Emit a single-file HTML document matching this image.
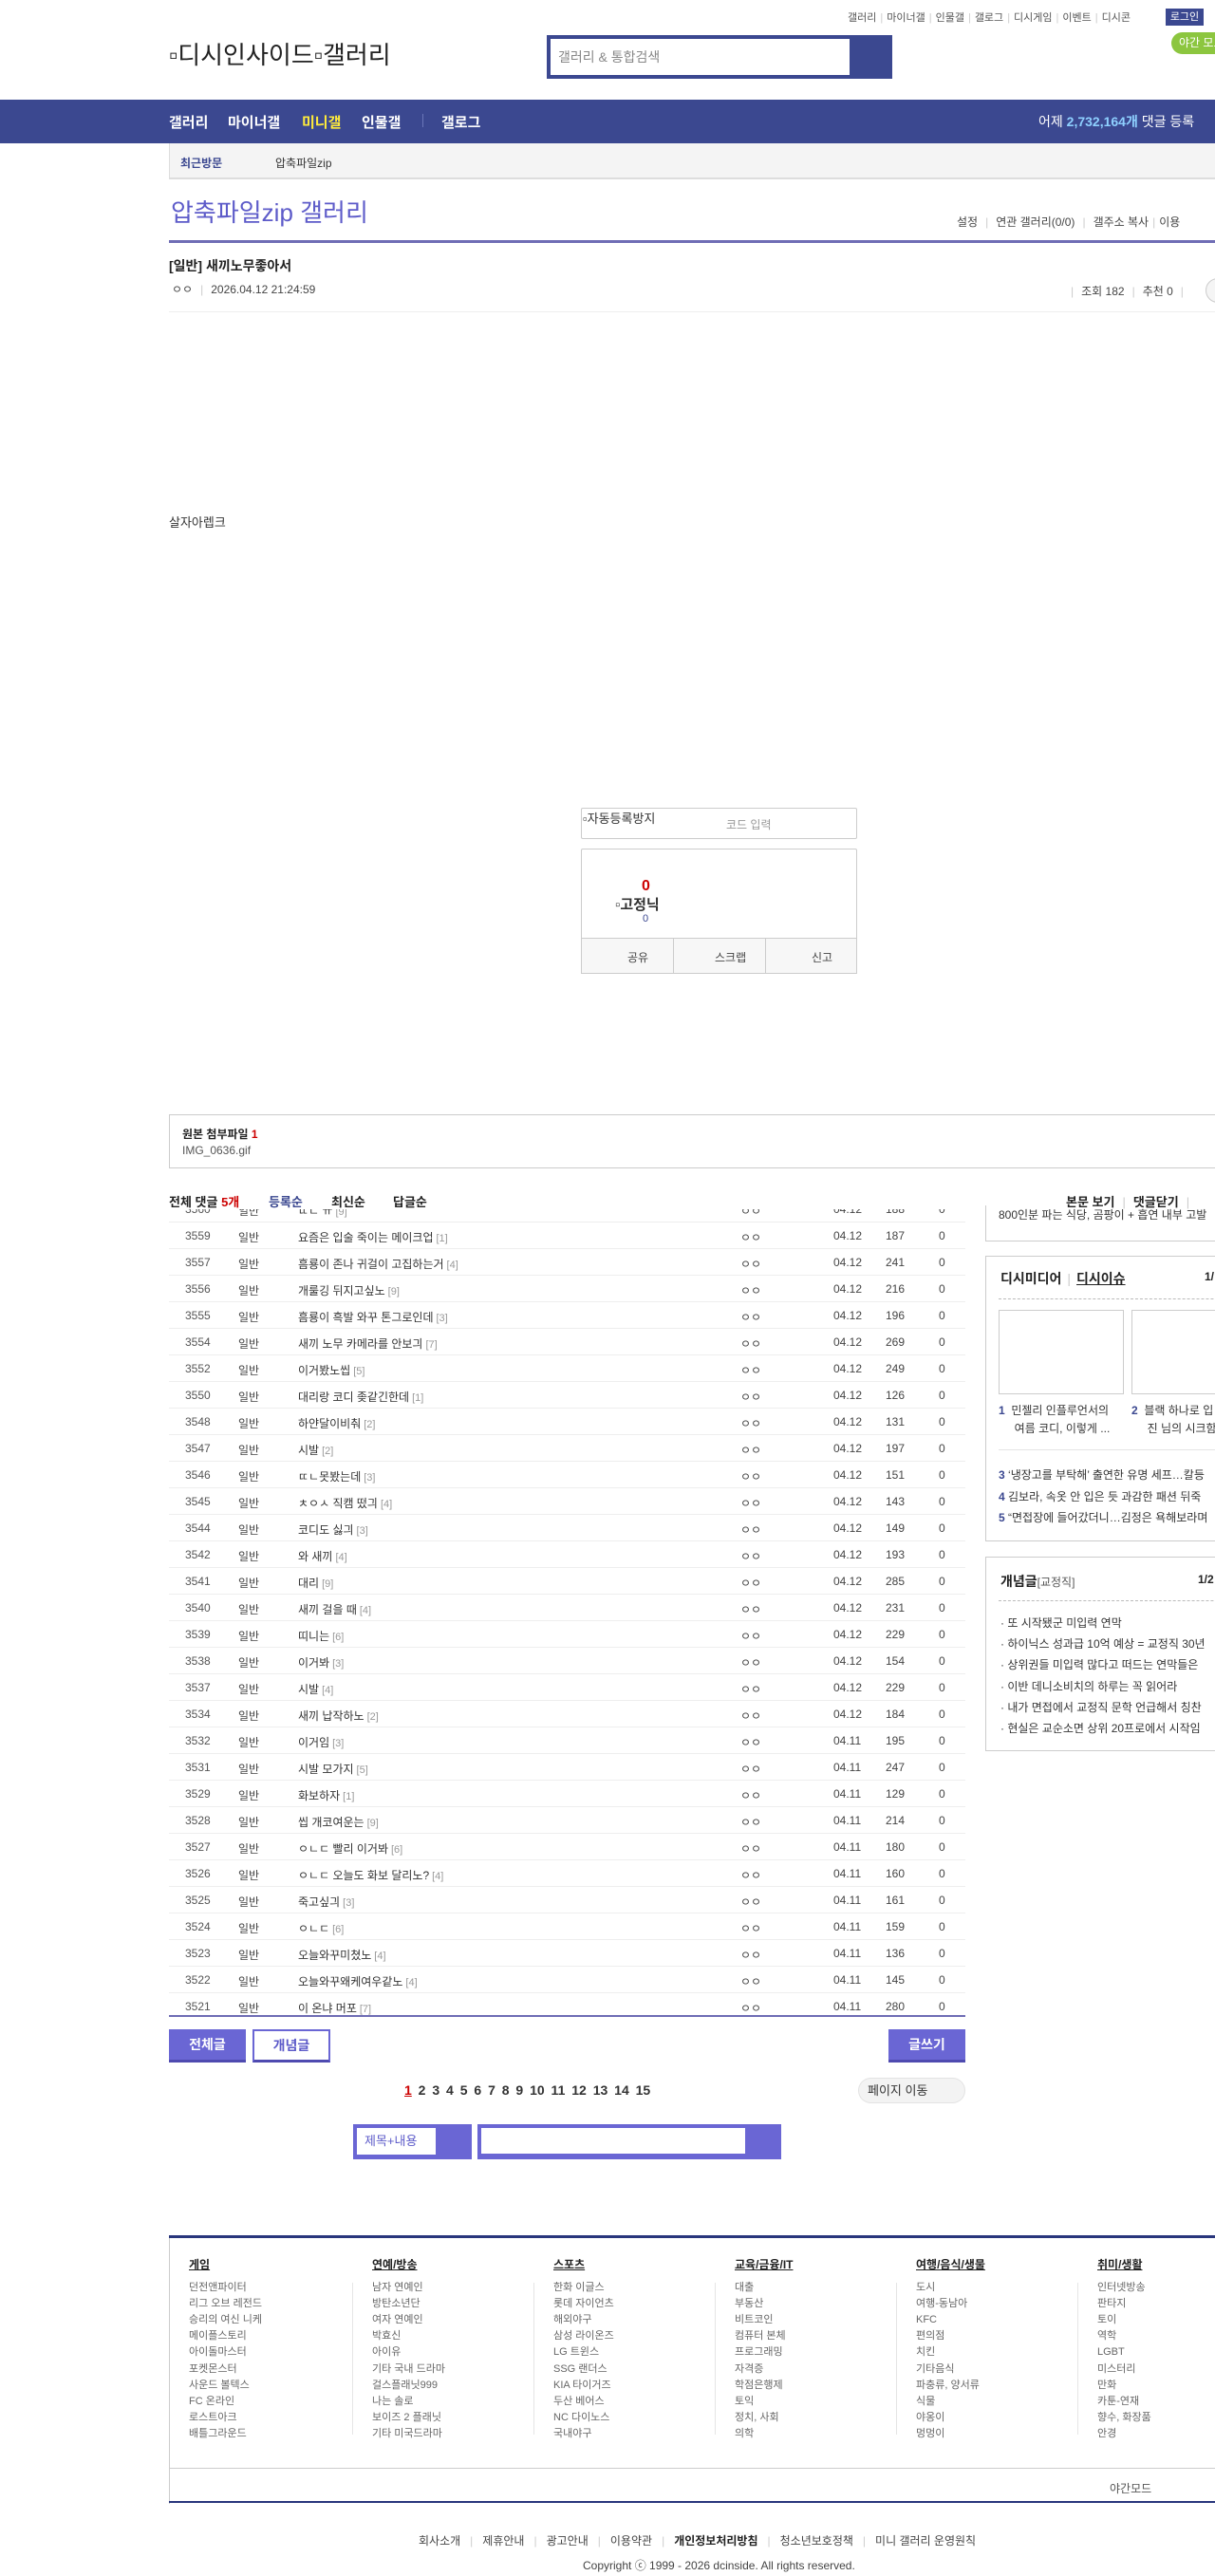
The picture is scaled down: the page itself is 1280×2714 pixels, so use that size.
<!DOCTYPE html>
<html><head><meta charset="utf-8">
<style>
*{margin:0;padding:0;box-sizing:border-box}
html,body{width:1280px;height:2714px;overflow:hidden;background:#fff}
body{font-family:"Liberation Sans","Noto Sans CJK KR",sans-serif;color:#333;font-size:12px;position:relative}
.a{position:absolute;white-space:nowrap}
.sep{color:#ccc;margin:0 4px}
.row{position:absolute;left:178px;width:839px;height:28px;border-bottom:1px solid #eee;font-size:12px;color:#444}
.row span{position:absolute;top:7px;white-space:nowrap}
.row .n{left:17px;color:#555}.row .k{left:73px}.row .t{left:136px;color:#333}.row .t i{font-style:normal;color:#999;font-size:11px;margin-left:3px}
.row .w{left:602px}.row .d{left:700px}.row .v{left:755px}.row .r{left:811px}
.fh{font-weight:bold;text-decoration:underline;font-size:12px;color:#222}
.fc{position:absolute;top:2378px;font-size:11px;color:#666;line-height:17.1px}
.fc b{display:block;font-size:12px;color:#222;text-decoration:underline;margin-bottom:7px}
.fsep{position:absolute;top:2405px;width:1px;height:160px;background:#e5e5e5}
</style></head><body>

<!-- top links -->
<div class="a" style="left:893px;top:10px;font-size:11px;color:#555">갤러리<span class="sep">|</span>마이너갤<span class="sep">|</span>인물갤<span class="sep">|</span>갤로그<span class="sep">|</span>디시게임<span class="sep">|</span>이벤트<span class="sep">|</span>디시콘</div>
<div class="a" style="left:1228px;top:9px;width:40px;height:18px;background:#3b4890;color:#fff;font-size:11px;text-align:center;line-height:18px">로그인</div>
<div class="a" style="left:1234px;top:34px;width:60px;height:23px;background:#8cc63f;border-radius:12px;color:#fff;font-size:12px;line-height:23px;padding-left:8px">야간 모드</div>

<!-- logo -->
<div class="a" style="left:178px;top:38px;font-size:26px;color:#222">▫디시인사이드▫갤러리</div>
<!-- search -->
<div class="a" style="left:576px;top:37px;width:364px;height:46px;background:#3b4890"></div>
<div class="a" style="left:580px;top:41px;width:315px;height:38px;background:#fff;font-size:14px;color:#888;line-height:38px;padding-left:8px">갤러리 &amp; 통합검색</div>

<!-- nav -->
<div class="a" style="left:0;top:105px;width:1280px;height:46px;background:#3b4890"></div>
<div class="a" style="left:178px;top:118px;font-size:15px;font-weight:bold;color:#fff">갤러리</div>
<div class="a" style="left:240px;top:118px;font-size:15px;font-weight:bold;color:#fff">마이너갤</div>
<div class="a" style="left:318px;top:118px;font-size:15px;font-weight:bold;color:#ffeb3b">미니갤</div>
<div class="a" style="left:381px;top:118px;font-size:15px;font-weight:bold;color:#fff">인물갤</div>
<div class="a" style="left:445px;top:120px;width:1px;height:14px;background:#6a76b8"></div>
<div class="a" style="left:465px;top:118px;font-size:15px;font-weight:bold;color:#fff">갤로그</div>
<div class="a" style="left:1094px;top:118px;font-size:14px;color:#fff">어제 <b style="color:#8ed0ff">2,732,164개</b> 댓글 등록</div>

<!-- sub bar -->
<div class="a" style="left:178px;top:151px;width:1160px;height:38px;background:#f4f4f4;border:1px solid #ddd;border-top:none;border-bottom:2px solid #ddd"></div>
<div class="a" style="left:190px;top:163px;font-size:12px;font-weight:bold;color:#3b4890">최근방문</div>
<div class="a" style="left:290px;top:163px;font-size:12px;color:#333">압축파일zip</div>

<!-- gallery title -->
<div class="a" style="left:180px;top:204px;font-size:26px;color:#5d5bc9">압축파일zip 갤러리</div>
<div class="a" style="left:1008px;top:225px;font-size:12px;color:#444">설정<span class="sep" style="margin:0 8px">|</span>연관 갤러리(0/0)<span class="sep" style="margin:0 8px">|</span>갤주소 복사<span class="sep">|</span>이용</div>
<div class="a" style="left:178px;top:253px;width:1160px;height:3px;background:#6f6db5"></div>

<!-- post head -->
<div class="a" style="left:178px;top:270px;font-size:14px;font-weight:bold;color:#222">[일반] 새끼노무좋아서</div>
<div class="a" style="left:181px;top:296px;font-size:12px;color:#444">ㅇㅇ<span class="sep" style="margin:0 8px">|</span>2026.04.12 21:24:59</div>
<div class="a" style="left:1128px;top:298px;font-size:12px;color:#444"><span class="sep" style="margin:0 8px 0 0">|</span>조회 182<span class="sep" style="margin:0 8px">|</span>추천 0<span class="sep" style="margin:0 8px">|</span></div>
<div class="a" style="left:1270px;top:293px;width:30px;height:26px;border:1px solid #ccc;border-radius:13px;background:#f5f5f5"></div>
<div class="a" style="left:178px;top:328px;width:1160px;height:1px;background:#eee"></div>

<div class="a" style="left:178px;top:540px;font-size:13px;color:#333">살자아렙크</div>

<!-- captcha -->
<div class="a" style="left:612px;top:851px;width:291px;height:33px;border:1px solid #ccc;border-radius:2px"></div>
<div class="a" style="left:614px;top:852px;font-size:13px;color:#333">▫자동등록방지</div>
<div class="a" style="left:765px;top:860px;font-size:12px;color:#999">코드 입력</div>
<!-- recommend -->
<div class="a" style="left:612px;top:894px;width:291px;height:132px;border:1px solid #ccc;border-radius:2px"></div>
<div class="a" style="left:612px;top:988px;width:291px;height:38px;border:1px solid #ccc;background:#f7f7f7"></div>
<div class="a" style="left:709px;top:988px;width:1px;height:38px;background:#ccc"></div>
<div class="a" style="left:806px;top:988px;width:1px;height:38px;background:#ccc"></div>
<div class="a" style="left:661px;top:1000px;font-size:12px;color:#444">공유</div>
<div class="a" style="left:753px;top:1000px;font-size:12px;color:#444">스크랩</div>
<div class="a" style="left:855px;top:1000px;font-size:12px;color:#444">신고</div>
<div class="a" style="left:676px;top:925px;font-size:16px;font-weight:bold;color:#c00">0</div>
<div class="a" style="left:648px;top:942px;font-size:15px;font-weight:bold;color:#333">▫고정닉</div>
<div class="a" style="left:677px;top:962px;font-size:11px;color:#3b4890">0</div>

<!-- attachment -->
<div class="a" style="left:178px;top:1174px;width:1160px;height:57px;border:1px solid #ccc"></div>
<div class="a" style="left:192px;top:1186px;font-size:12px;font-weight:bold;color:#222">원본 첨부파일 <span style="color:#c00">1</span></div>
<div class="a" style="left:192px;top:1205px;font-size:12px;color:#555">IMG_0636.gif</div>

<!-- list -->
<div class="a" style="left:0;top:1260px;width:1030px;height:870px;overflow:hidden">
<div style="position:absolute;left:0;top:0;width:1030px;height:1000px">
<div class="row" style="top:0"><span class="n">3560</span><span class="k">일반</span><span class="t">ㄸㄴ ㅠ<i>[9]</i></span><span class="w">ㅇㅇ</span><span class="d">04.12</span><span class="v">188</span><span class="r">0</span></div>
</div></div>
<div class="a" style="left:0;top:1258px;width:1030px;height:16px;background:#fff"></div>
<div id="rows"></div>
<div class="a" style="left:178px;top:1256px;font-size:13px;font-weight:bold;color:#222">전체 댓글 <span style="color:#c00">5개</span></div>
<div class="a" style="left:283px;top:1256px;font-size:13px;font-weight:bold;color:#3b4890">등록순</div>
<div class="a" style="left:349px;top:1256px;font-size:13px;font-weight:bold;color:#222">최신순</div>
<div class="a" style="left:414px;top:1256px;font-size:13px;font-weight:bold;color:#222">답글순</div>
<div class="a" style="left:1123px;top:1256px;font-size:13px;font-weight:bold;color:#222">본문 보기<span class="sep" style="margin:0 8px;font-weight:normal">|</span>댓글닫기<span class="sep" style="margin:0 8px;font-weight:normal">|</span></div>

<!-- sidebar -->
<div class="a" style="left:1038px;top:1270px;width:300px;height:38px;border:1px solid #ccc;border-top:none"></div>
<div class="a" style="left:1052px;top:1271px;font-size:12px;color:#333">800인분 파는 식당, 곰팡이 + 흡연 내부 고발</div>
<div class="a" style="left:1038px;top:1323px;width:300px;height:301px;border:1px solid #ccc"></div>
<div class="a" style="left:1054px;top:1337px;font-size:14px;font-weight:bold;color:#222">디시미디어<span class="sep" style="margin:0 6px;font-weight:normal">|</span><u>디시이슈</u></div>
<div class="a" style="left:1269px;top:1338px;font-size:12px;font-weight:bold;color:#222">1/</div>
<div class="a" style="left:1052px;top:1368px;width:286px;border-top:1px dashed #bbb"></div>
<div class="a" style="left:1052px;top:1380px;width:132px;height:89px;border:1px solid #ccc"></div>
<div class="a" style="left:1192px;top:1380px;width:132px;height:89px;border:1px solid #ccc"></div>
<div class="a" style="left:1052px;top:1477px;font-size:12px;color:#333;line-height:19px"><b style="color:#3b4890">1</b>&nbsp; 민젤리 인플루언서의<br>&nbsp;&nbsp;&nbsp;&nbsp; 여름 코디, 이렇게 ...</div>
<div class="a" style="left:1192px;top:1477px;font-size:12px;color:#333;line-height:19px"><b style="color:#3b4890">2</b>&nbsp; 블랙 하나로 입<br>&nbsp;&nbsp;&nbsp;&nbsp; 진 님의 시크함</div>
<div class="a" style="left:1052px;top:1527px;width:286px;height:1px;background:#e5e5e5"></div>
<div class="a" style="left:1052px;top:1543px;font-size:12px;color:#333;line-height:22.5px"><b style="color:#3b4890">3</b> ‘냉장고를 부탁해’ 출연한 유명 세프…칼등<br><b style="color:#3b4890">4</b> 김보라, 속옷 안 입은 듯 과감한 패션 뒤죽<br><b style="color:#3b4890">5</b> “면접장에 들어갔더니…김정은 욕해보라며</div>
<div class="a" style="left:1038px;top:1640px;width:300px;height:205px;border:1px solid #ccc"></div>
<div class="a" style="left:1054px;top:1656px;font-size:14px;font-weight:bold;color:#222">개념글<span style="font-weight:normal;font-size:12px;color:#555">[교정직]</span></div>
<div class="a" style="left:1262px;top:1657px;font-size:12px;font-weight:bold;color:#222">1/2</div>
<div class="a" style="left:1052px;top:1686px;width:286px;border-top:1px dashed #bbb"></div>
<div class="a" style="left:1054px;top:1699px;font-size:12px;color:#333;line-height:22.2px">· 또 시작됐군 미입력 연막<br>· 하이닉스 성과급 10억 예상 = 교정직 30년<br>· 상위권들 미입력 많다고 떠드는 연막들은<br>· 이반 데니소비치의 하루는 꼭 읽어라<br>· 내가 면접에서 교정직 문학 언급해서 칭찬<br>· 현실은 교순소면 상위 20프로에서 시작임</div>

<div class="a" style="left:178px;top:2123px;width:839px;height:2px;background:#6f6db5"></div>

<!-- buttons -->
<div class="a" style="left:178px;top:2138px;width:81px;height:35px;background:#6a66d4;border-bottom:3px solid #4f4bb0;color:#fff;font-size:14px;font-weight:bold;text-align:center;line-height:32px">전체글</div>
<div class="a" style="left:266px;top:2138px;width:82px;height:35px;background:#fff;border:2px solid #6a66d4;border-bottom:3px solid #4f4bb0;color:#5d5bc9;font-size:14px;font-weight:bold;text-align:center;line-height:30px">개념글</div>
<div class="a" style="left:936px;top:2138px;width:81px;height:35px;background:#6a66d4;border-bottom:3px solid #4f4bb0;color:#fff;font-size:14px;font-weight:bold;text-align:center;line-height:32px">글쓰기</div>

<!-- pagination -->
<div class="a" style="left:426px;top:2194px;font-size:14px;font-weight:bold;color:#333;word-spacing:3px"><u style="color:#c00">1</u> 2 3 4 5 6 7 8 9 10 11 12 13 14 15</div>
<div class="a" style="left:904px;top:2189px;width:113px;height:27px;background:#f3f3f3;border:1px solid #e3e3e3;border-radius:14px;font-size:13px;color:#333;line-height:25px;padding-left:9px">페이지 이동</div>

<!-- search -->
<div class="a" style="left:372px;top:2238px;width:125px;height:37px;background:#6a66d4"></div>
<div class="a" style="left:376px;top:2242px;width:83px;height:28px;background:#fff;color:#5d5bc9;font-size:13px;line-height:28px;padding-left:8px">제목+내용</div>
<div class="a" style="left:503px;top:2238px;width:320px;height:37px;background:#6a66d4"></div>
<div class="a" style="left:507px;top:2242px;width:278px;height:27px;background:#fff"></div>

<!-- footer -->
<div class="a" style="left:178px;top:2355px;width:1160px;height:3px;background:#29367c"></div>
<div class="fc" style="left:199px"><b>게임</b>던전앤파이터<br>리그 오브 레전드<br>승리의 여신 니케<br>메이플스토리<br>아이돌마스터<br>포켓몬스터<br>사운드 볼텍스<br>FC 온라인<br>로스트아크<br>배틀그라운드</div>
<div class="fsep" style="left:371px"></div>
<div class="fc" style="left:392px"><b>연예/방송</b>남자 연예인<br>방탄소년단<br>여자 연예인<br>박효신<br>아이유<br>기타 국내 드라마<br>걸스플래닛999<br>나는 솔로<br>보이즈 2 플래닛<br>기타 미국드라마</div>
<div class="fsep" style="left:562px"></div>
<div class="fc" style="left:583px"><b>스포츠</b>한화 이글스<br>롯데 자이언츠<br>해외야구<br>삼성 라이온즈<br>LG 트윈스<br>SSG 랜더스<br>KIA 타이거즈<br>두산 베어스<br>NC 다이노스<br>국내야구</div>
<div class="fsep" style="left:753px"></div>
<div class="fc" style="left:774px"><b>교육/금융/IT</b>대출<br>부동산<br>비트코인<br>컴퓨터 본체<br>프로그래밍<br>자격증<br>학점은행제<br>토익<br>정치, 사회<br>의학</div>
<div class="fsep" style="left:944px"></div>
<div class="fc" style="left:965px"><b>여행/음식/생물</b>도시<br>여행-동남아<br>KFC<br>편의점<br>치킨<br>기타음식<br>파충류, 양서류<br>식물<br>야옹이<br>멍멍이</div>
<div class="fsep" style="left:1135px"></div>
<div class="fc" style="left:1156px"><b>취미/생활</b>인터넷방송<br>판타지<br>토이<br>역학<br>LGBT<br>미스터리<br>만화<br>카툰-연재<br>향수, 화장품<br>안경</div>
<div class="a" style="left:178px;top:2600px;width:1160px;height:1px;background:#ccc"></div>
<div class="a" style="left:178px;top:2358px;width:1px;height:280px;background:#ccc"></div>
<div class="a" style="left:1169px;top:2613px;font-size:12px;color:#555">야간모드</div>
<div class="a" style="left:178px;top:2635px;width:1160px;height:2px;background:#29367c"></div>
<div class="a" style="left:441px;top:2668px;font-size:12px;color:#444">회사소개<span class="sep" style="margin:0 10px">|</span>제휴안내<span class="sep" style="margin:0 10px">|</span>광고안내<span class="sep" style="margin:0 10px">|</span>이용약관<span class="sep" style="margin:0 10px">|</span><b style="color:#222">개인정보처리방침</b><span class="sep" style="margin:0 10px">|</span>청소년보호정책<span class="sep" style="margin:0 10px">|</span>미니 갤러리 운영원칙</div>
<div class="a" style="left:614px;top:2694px;font-size:12px;color:#444">Copyright ⓒ 1999 - 2026 dcinside. All rights reserved.</div>

<script>
var d=[["3559","요즘은 입술 죽이는 메이크업",1,"04.12",187],["3557","흠룡이 존나 귀걸이 고집하는거",4,"04.12",241],["3556","개룰깅 뒤지고싶노",9,"04.12",216],["3555","흠룡이 흑발 와꾸 톤그로인데",3,"04.12",196],["3554","새끼 노무 카메라를 안보긔",7,"04.12",269],["3552","이거봤노씹",5,"04.12",249],["3550","대리랑 코디 좆같긴한데",1,"04.12",126],["3548","하얀달이비춰",2,"04.12",131],["3547","시발",2,"04.12",197],["3546","ㄸㄴ못봤는데",3,"04.12",151],["3545","ㅊㅇㅅ 직캠 떴긔",4,"04.12",143],["3544","코디도 싫긔",3,"04.12",149],["3542","와 새끼",4,"04.12",193],["3541","대리",9,"04.12",285],["3540","새끼 걸을 때",4,"04.12",231],["3539","띠니는",6,"04.12",229],["3538","이거봐",3,"04.12",154],["3537","시발",4,"04.12",229],["3534","새끼 납작하노",2,"04.12",184],["3532","이거임",3,"04.11",195],["3531","시발 모가지",5,"04.11",247],["3529","화보하자",1,"04.11",129],["3528","씹 개코여운는",9,"04.11",214],["3527","ㅇㄴㄷ 빨리 이거봐",6,"04.11",180],["3526","ㅇㄴㄷ 오늘도 화보 달리노?",4,"04.11",160],["3525","죽고싶긔",3,"04.11",161],["3524","ㅇㄴㄷ",6,"04.11",159],["3523","오늘와꾸미쳤노",4,"04.11",136],["3522","오늘와꾸왜케여우같노",4,"04.11",145],["3521","이 온냐 머포",7,"04.11",280]];
var h="";d.forEach(function(r,i){h+='<div class="row" style="top:'+(1288+i*28)+'px'+(i==d.length-1?';border-bottom:none':'')+'"><span class="n">'+r[0]+'</span><span class="k">일반</span><span class="t">'+r[1]+'<i>['+r[2]+']</i></span><span class="w">ㅇㅇ</span><span class="d">'+r[3]+'</span><span class="v">'+r[4]+'</span><span class="r">0</span></div>';});
document.getElementById("rows").innerHTML=h;
</script>
</body></html>
